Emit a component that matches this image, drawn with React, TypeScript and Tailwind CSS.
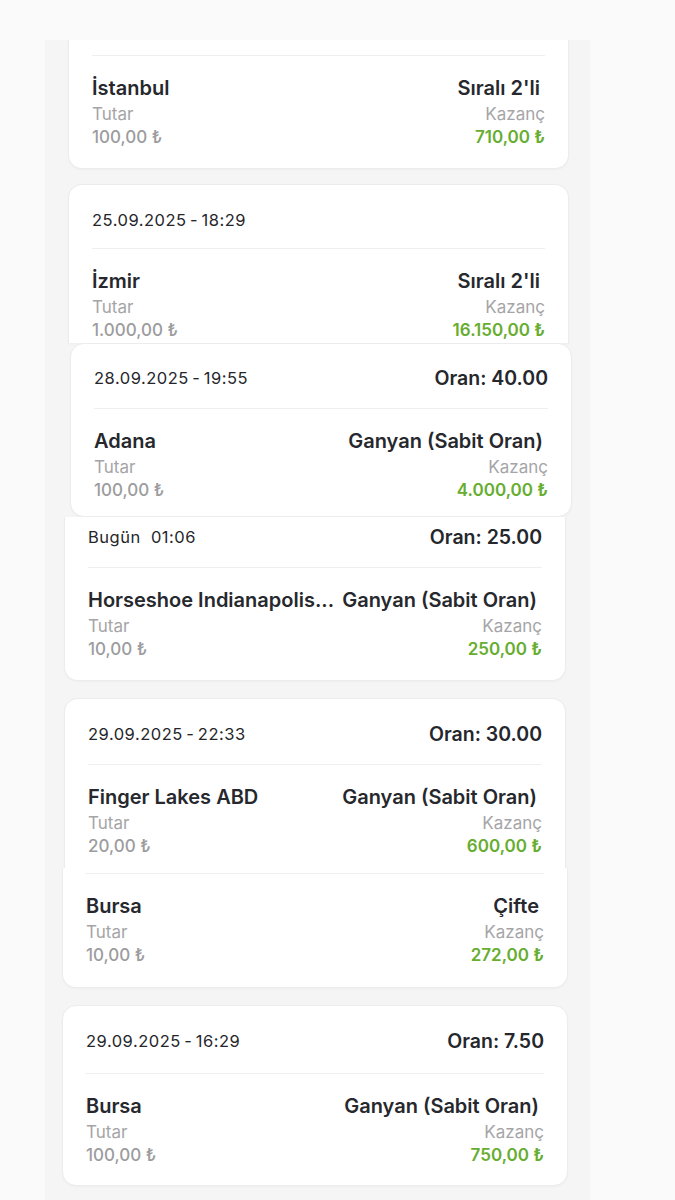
import React from "react";

type Frag = {
  h: string;
  mt: string;
  ml: string;
  w: string;
  round: string;
  border: string;
  head: string;
  date?: string;
  oran?: string;
  title: string;
  game: string;
  tutar: string;
  kazanc: string;
};

const frags: Frag[] = [
  {
    h: "h-[129px]",
    mt: "mt-0",
    ml: "ml-[23px]",
    w: "w-[501px]",
    round: "rounded-b-[14px]",
    border: "border-x border-b",
    head: "h-[15px]",
    title: "İstanbul",
    game: "Sıralı 2'li",
    tutar: "100,00 ₺",
    kazanc: "710,00 ₺",
  },
  {
    h: "h-[159px]",
    mt: "mt-[15px]",
    ml: "ml-[23px]",
    w: "w-[501px]",
    round: "rounded-t-[14px]",
    border: "border-x border-t",
    head: "h-[63px] pt-[22px]",
    date: "25.09.2025\u2009-\u200918:29",
    title: "İzmir",
    game: "Sıralı 2'li",
    tutar: "1.000,00 ₺",
    kazanc: "16.150,00 ₺",
  },
  {
    h: "h-[174px]",
    mt: "mt-0",
    ml: "ml-[25px]",
    w: "w-[502px]",
    round: "rounded-[14px]",
    border: "border",
    head: "h-[64px] pt-[21px]",
    date: "28.09.2025\u2009-\u200919:55",
    oran: "40.00",
    title: "Adana",
    game: "Ganyan (Sabit Oran)",
    tutar: "100,00 ₺",
    kazanc: "4.000,00 ₺",
  },
  {
    h: "h-[164px]",
    mt: "mt-0",
    ml: "ml-[19px]",
    w: "w-[502px]",
    round: "rounded-b-[14px]",
    border: "border-x border-b",
    head: "h-[50px] pt-[7px]",
    date: "Bugün  01:06",
    oran: "25.00",
    title: "Horseshoe Indianapolis...",
    game: "Ganyan (Sabit Oran)",
    tutar: "10,00 ₺",
    kazanc: "250,00 ₺",
  },
  {
    h: "h-[170px]",
    mt: "mt-[17px]",
    ml: "ml-[19px]",
    w: "w-[502px]",
    round: "rounded-t-[14px]",
    border: "border-x border-t",
    head: "h-[65px] pt-[22px]",
    date: "29.09.2025\u2009-\u200922:33",
    oran: "30.00",
    title: "Finger Lakes ABD",
    game: "Ganyan (Sabit Oran)",
    tutar: "20,00 ₺",
    kazanc: "600,00 ₺",
  },
  {
    h: "h-[120px]",
    mt: "mt-0",
    ml: "ml-[17px]",
    w: "w-[506px]",
    round: "rounded-b-[14px]",
    border: "border-x border-b",
    head: "h-[5px]",
    title: "Bursa",
    game: "Çifte",
    tutar: "10,00 ₺",
    kazanc: "272,00 ₺",
  },
  {
    h: "h-[181px]",
    mt: "mt-[17px]",
    ml: "ml-[17px]",
    w: "w-[506px]",
    round: "rounded-[14px]",
    border: "border",
    head: "h-[67px] pt-[22px]",
    date: "29.09.2025\u2009-\u200916:29",
    oran: "7.50",
    title: "Bursa",
    game: "Ganyan (Sabit Oran)",
    tutar: "100,00 ₺",
    kazanc: "750,00 ₺",
  },
];

function Card({ f }: { f: Frag }) {
  return (
    <div
      className={`${f.h} ${f.mt} ${f.ml} ${f.w} ${f.round} ${f.border} border-[#ececec] bg-white overflow-hidden px-[23px] shadow-[0_1px_2px_rgba(0,0,0,0.03)]`}
    >
      <div className={`${f.head} box-border`}>
        {f.date !== undefined && (
          <div className="flex items-center justify-between h-[26px]">
            <span className="whitespace-pre text-[16.5px] leading-[26px] tracking-[0.5px] text-[#25262a]">
              {f.date}
            </span>
            {f.oran && (
              <span className="text-[19.5px] leading-[26px] font-semibold text-[#25272c]">
                Oran:&nbsp;{f.oran}
              </span>
            )}
          </div>
        )}
      </div>
      <div className="h-px bg-[#efefef]" />
      <div className="pt-[20px]">
        <div className="flex items-center justify-between gap-[10px] h-[24px]">
          <span className="min-w-0 whitespace-nowrap text-[20px] leading-[24px] font-semibold text-[#26282d]">
            {f.title}
          </span>
          <span className="shrink-0 mr-[5px] whitespace-nowrap text-[20px] leading-[24px] font-semibold text-[#26282d]">
            {f.game}
          </span>
        </div>
        <div className="mt-[2px] flex items-center justify-between h-[24px] text-[17px] leading-[24px] text-[#a5a5a7]">
          <span>Tutar</span>
          <span>Kazanç</span>
        </div>
        <div className="flex items-center justify-between h-[22px] text-[17px] leading-[22px] font-medium">
          <span className="text-[#9c9c9e]">{f.tutar}</span>
          <span className="text-[#66ad30] font-semibold">{f.kazanc}</span>
        </div>
      </div>
    </div>
  );
}

export default function App() {
  return (
    <div
      className="w-[675px] h-[1200px] overflow-hidden bg-[#fafafa] pt-[40px]"
      style={{ fontFamily: "Inter, 'Noto Sans', sans-serif" }}
    >
      <div className="ml-[45px] w-[545px] h-[1160px] bg-[#f6f5f6] flex flex-col">
        {frags.map((f, i) => (
          <Card key={i} f={f} />
        ))}
      </div>
    </div>
  );
}
